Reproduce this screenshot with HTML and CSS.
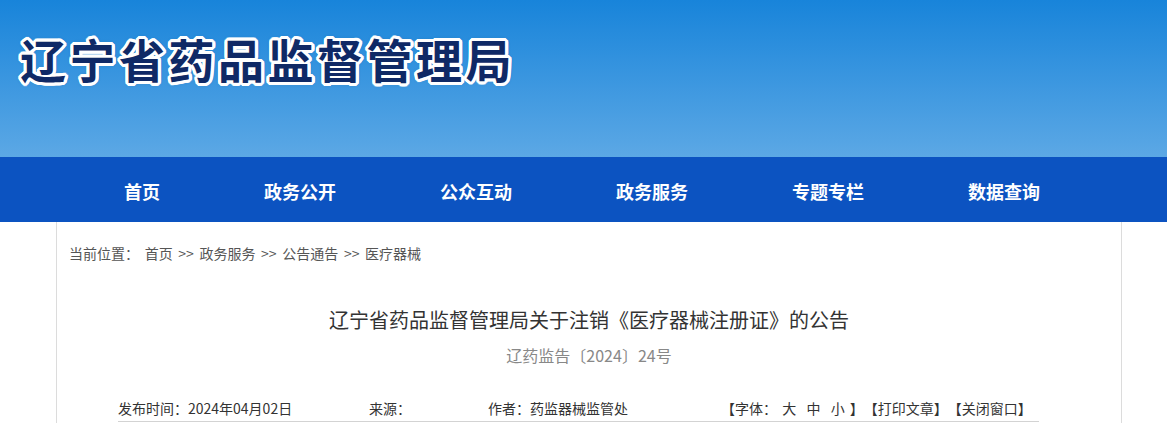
FILE: index.html
```html
<!DOCTYPE html>
<html>
<head>
	<title>辽宁省药品监督管理局</title>
	<meta charset="UTF-8">
	<link rel="stylesheet" href="styles.css">
</head>
<body>
	<div class="header">
		<h1 class="site-name">辽宁省药品监督管理局</h1>
	</div>
	<div class="nav">
		<a class="nav-item">首页</a>
		<a class="nav-item">政务公开</a>
		<a class="nav-item">公众互动</a>
		<a class="nav-item">政务服务</a>
		<a class="nav-item">专题专栏</a>
		<a class="nav-item">数据查询</a>
	</div>
	<div class="main">
		<div class="crumb">当前位置： 首页 &gt;&gt; 政务服务 &gt;&gt; 公告通告 &gt;&gt; 医疗器械</div>
		<h2 class="art-title">辽宁省药品监督管理局关于注销《医疗器械注册证》的公告</h2>
		<div class="art-sub">辽药监告〔2024〕24号</div>
		<div class="art-info">
			<span class="info-date">发布时间：2024年04月02日</span>
			<span class="info-src">来源：</span>
			<span class="info-author">作者：药监器械监管处</span>
			<span class="info-tools">【字体： 大 &nbsp;中 &nbsp;小 】【打印文章】【关闭窗口】</span>
		</div>
	</div>
</body>
</html>
```

FILE: styles.css
```css
* {
	margin: 0;
	padding: 0;
	box-sizing: border-box;
}

body {
	background: white;
	font-family: "Noto Sans CJK SC", "Liberation Sans", sans-serif;
	color: #333;
	text-spacing-trim: space-all;
}

.header {
	height: 157px;
	padding: 28px 0 0 20px;
	background: linear-gradient(to bottom, #1884da, #5ca8e5);
}

.site-name {
	font-size: 46px;
	font-weight: 700;
	letter-spacing: 3.5px;
	line-height: 60px;
	color: #0f2966;
	text-shadow:
		3px 0 0 #fff, -3px 0 0 #fff, 0 3px 0 #fff, 0 -3px 0 #fff,
		2px 2px 0 #fff, -2px -2px 0 #fff, 2px -2px 0 #fff, -2px 2px 0 #fff,
		3px 1px 0 #fff, -3px 1px 0 #fff, 3px -1px 0 #fff, -3px -1px 0 #fff,
		1px 3px 0 #fff, -1px 3px 0 #fff, 1px -3px 0 #fff, -1px -3px 0 #fff,
		0 0 5px rgba(0,0,0,0.35);
}

.nav {
	height: 65px;
	display: flex;
	align-items: center;
	gap: 104px;
	padding-left: 124px;
	background: #0c53c1;
}

.nav-item {
	font-size: 18px;
	font-weight: bold;
	color: white;
	line-height: 24px;
	padding-top: 2px;
}

.main {
	width: 1066px;
	min-height: 201px;
	margin-left: 56px;
	padding: 22px 0 0 12px;
	border-left: 1px solid #dcdcdc;
	border-right: 1px solid #dcdcdc;
}

.crumb {
	font-size: 14px;
	line-height: 18px;
	color: #555;
	word-spacing: 2.5px;
}

.art-title {
	margin: 43px 12px 0 0;
	font-size: 20px;
	font-weight: normal;
	line-height: 30px;
	text-align: center;
	color: #333;
}

.art-sub {
	margin: 8px 12px 0 0;
	font-size: 16px;
	line-height: 24px;
	text-align: center;
	color: #888;
}

.art-info {
	display: flex;
	width: 921px;
	margin: 30px 0 0 49px;
	padding-bottom: 2px;
	font-size: 14px;
	line-height: 22px;
	color: #333;
	border-bottom: 1px solid #d3d3d3;
}

.info-date {
	width: 251px;
}

.info-src {
	width: 119px;
}

.info-author {
	width: 233px;
}

.info-tools {
	word-spacing: 2px;
}
```
